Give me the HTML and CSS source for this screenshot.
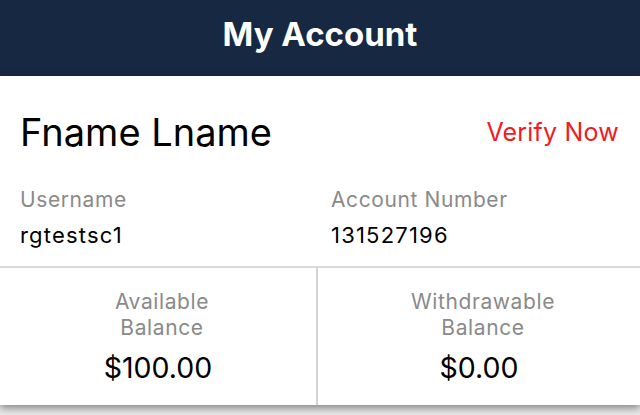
FILE: index.html
```html
<!DOCTYPE html>
<html lang="en">

<head>
    <meta charset="UTF-8">
    <meta name="viewport" content="width=device-width, initial-scale=1.0">
    <title>My Account</title>
    <link rel="stylesheet" href="styles.css">
</head>

<body>
    <div class="header">
        <h1>My Account</h1>
    </div>

    <div class="card">
        <div class="name-row">
            <span class="full-name">Fname Lname</span>
            <a class="verify" href="#">Verify Now</a>
        </div>

        <div class="info-row">
            <div class="info">
                <p class="label">Username</p>
                <p class="value">rgtestsc1</p>
            </div>
            <div class="info">
                <p class="label">Account Number</p>
                <p class="value">131527196</p>
            </div>
        </div>

        <div class="balances">
            <div class="balance">
                <p class="balance-label">Available<br>Balance</p>
                <p class="amount">$100.00</p>
            </div>
            <div class="balance">
                <p class="balance-label">Withdrawable<br>Balance</p>
                <p class="amount">$0.00</p>
            </div>
        </div>
    </div>
</body>

</html>
```

FILE: styles.css
```css
body {
    margin: 0;
    background-color: #e9e9e9;
    font-family: 'Inter', 'Liberation Sans', sans-serif;
    height: 415px;
    overflow: hidden;
}

p {
    margin: 0;
}

.header {
    background-color: #162842;
    height: 76px;
    box-sizing: border-box;
    padding-bottom: 9px;
    display: flex;
    justify-content: center;
    align-items: center;
}

.header h1 {
    margin: 0;
    color: #fff;
    font-size: 33px;
    font-weight: 700;
}

.card {
    background-color: #fff;
    box-shadow: 0 3px 8px rgba(0, 0, 0, 0.45);
}

.name-row {
    display: flex;
    justify-content: space-between;
    align-items: center;
    padding: 32px 21px 0 20px;
    height: 48px;
}

.full-name {
    font-size: 38px;
    color: #000;
}

.verify {
    color: #ee1c25;
    font-size: 25px;
    letter-spacing: 0.2px;
    text-decoration: none;
}

.info-row {
    display: grid;
    grid-template-columns: 311px 1fr;
    padding: 31px 20px 0 20px;
    height: 79px;
    border-bottom: 2px solid #d9d9d9;
}

.label {
    color: #8a8a8a;
    font-size: 21px;
    letter-spacing: 0.6px;
    line-height: 26px;
}

.value {
    color: #000;
    font-size: 22px;
    letter-spacing: 1.2px;
    line-height: 26px;
    margin-top: 9px;
}

.balances {
    display: grid;
    grid-template-columns: 318px 1fr;
    height: 137px;
}

.balance {
    text-align: center;
    padding-top: 21px;
}

.balance:first-child {
    border-right: 2px solid #d4d4d4;
}

.balance-label {
    color: #8a8a8a;
    font-size: 21px;
    letter-spacing: 0.6px;
    line-height: 26px;
    padding-left: 8px;
}

.amount {
    color: #000;
    font-size: 28.5px;
    line-height: 34px;
    margin-top: 10px;
}
```
